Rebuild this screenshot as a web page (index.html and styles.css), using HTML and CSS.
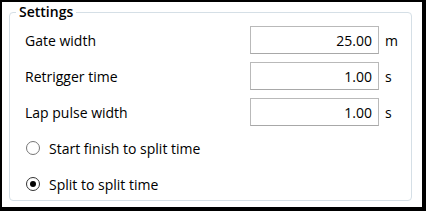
FILE: index.html
```html
<!DOCTYPE html>
<html>
<head>
<meta charset="utf-8">
<link rel="stylesheet" href="styles.css">
</head>
<body>
<div class="window">
  <fieldset class="group">
    <legend class="group-title">Settings</legend>
    <div class="field-row">
      <span class="field-label">Gate width</span>
      <input class="field-input" type="text" value="25.00">
      <span class="field-unit">m</span>
    </div>
    <div class="field-row">
      <span class="field-label">Retrigger time</span>
      <input class="field-input" type="text" value="1.00">
      <span class="field-unit">s</span>
    </div>
    <div class="field-row">
      <span class="field-label">Lap pulse width</span>
      <input class="field-input" type="text" value="1.00">
      <span class="field-unit">s</span>
    </div>
    <label class="radio-row">
      <input class="radio" type="radio" name="mode">
      <span>Start finish to split time</span>
    </label>
    <label class="radio-row">
      <input class="radio" type="radio" name="mode" checked>
      <span>Split to split time</span>
    </label>
  </fieldset>
</div>
</body>
</html>
```
FILE: styles.css
```css
html, body {
  margin: 0;
  padding: 0;
  background: #000;
}
body {
  width: 426px;
  height: 211px;
  padding: 2px 4px 4px 2px;
  box-sizing: border-box;
  font-family: "Open Sans", "Noto Sans", sans-serif;
  font-size: 14px;
  color: #000;
}
.window {
  background: #fff;
  height: 100%;
  padding: 0 10px 0 7px;
  box-sizing: border-box;
}
.group {
  margin: 0;
  padding: 4px 0 2px 15px;
  border: 1px solid #d5dfe6;
  border-radius: 4px;
  min-width: 0;
}
.group-title {
  margin-left: -9px;
  padding: 0 3px;
  font-weight: 600;
  font-size: 14px;
  line-height: 20px;
}
.field-row {
  display: flex;
  align-items: center;
  height: 28px;
  margin-bottom: 8px;
}
.field-label {
  flex: 1;
}
.field-input {
  width: 129px;
  height: 28px;
  box-sizing: border-box;
  border: 1px solid #b9b9b9;
  border-bottom-color: #a8a8a8;
  padding: 0 6px 0 4px;
  margin: 0;
  text-align: right;
  font: inherit;
  color: #000;
  outline: none;
}
.field-unit {
  width: 32px;
  padding-left: 6px;
  box-sizing: border-box;
}
.radio-row {
  display: flex;
  align-items: center;
  height: 28px;
  margin-bottom: 8px;
  padding-left: 1px;
  gap: 9px;
}
.radio-row:last-child {
  margin-bottom: 0;
}
.radio {
  appearance: none;
  -webkit-appearance: none;
  margin: 0;
  width: 14px;
  height: 14px;
  border: 1px solid #767676;
  border-radius: 50%;
  box-sizing: border-box;
  display: grid;
  place-items: center;
  background: #fff;
}
.radio:checked {
  border-color: #333;
}
.radio:checked::after {
  content: "";
  width: 6px;
  height: 6px;
  border-radius: 50%;
  background: #000;
}
```
